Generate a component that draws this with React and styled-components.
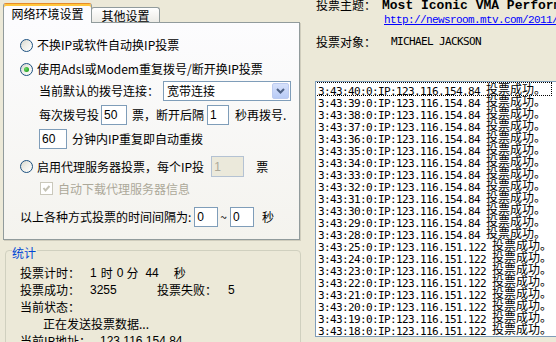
import React from "react";
import styled, { createGlobalStyle, css } from "styled-components";

const CJK = `"Noto Sans CJK SC", "Noto Sans", sans-serif`;
const MONO = `"Liberation Mono", "Noto Sans CJK SC", monospace`;
const DMONO = `"DejaVu Sans Mono", "Noto Sans CJK SC", monospace`;
const SANS = `"Liberation Sans", "Noto Sans CJK SC", sans-serif`;

const GlobalStyle = createGlobalStyle`
  html, body { margin: 0; padding: 0; background: #ece9d8; }
  body { font-family: ${CJK}; font-size: 12px; color: #000; }
  #root { width: 556px; height: 342px; overflow: hidden; }
`;

const Window = styled.div`
  display: flex;
  width: 556px;
  height: 342px;
  overflow: hidden;
  background: #ece9d8;
`;

const LeftCol = styled.div`
  flex: none;
  width: 301px;
  box-sizing: border-box;
  padding: 3px 0 0 3px;
  display: flex;
  flex-direction: column;
`;

const TabStrip = styled.div`
  display: flex;
  align-items: flex-end;
  height: 19px;
  flex: none;
`;

const Tab = styled.div`
  box-sizing: border-box;
  flex: none;
  width: ${(p) => p.$w}px;
  display: flex;
  align-items: center;
  justify-content: center;
  line-height: 12px;
  white-space: nowrap;
  border: 1px solid #919b9c;
  border-bottom: none;
  border-radius: 3px 3px 0 0;
  position: relative;
  ${(p) =>
    p.$active
      ? css`
          height: 20px;
          margin-bottom: -1px;
          z-index: 1;
          background: #fcfcfe;
          border-top: 1px solid #e68b2c;
          box-shadow: inset 0 2px 0 #ffc73c;
          padding-top: 1px;
        `
      : css`
          height: 15px;
          margin-left: -1px;
          background: linear-gradient(#ffffff, #ecebe6);
          padding-top: 1px;
        `}
`;

const TabPanel = styled.div`
  box-sizing: border-box;
  flex: none;
  width: 297px;
  height: 218px;
  border: 1px solid #919b9c;
  background: linear-gradient(180deg, #fcfcfe 0%, #f4f3ee 100%);
  box-shadow: 1px 1px 0 #d0cdbd;
  padding: 14px 0 0 16px;
  display: flex;
  flex-direction: column;
`;

const Line = styled.div`
  display: flex;
  align-items: center;
  white-space: nowrap;
  line-height: 12px;
  flex: none;
  height: ${(p) => p.$h || 16}px;
  margin-top: ${(p) => p.$mt || 0}px;
  margin-left: ${(p) => p.$ml || 0}px;
  color: ${(p) => (p.$disabled ? "#aca899" : "#000")};
`;

const Txt = styled.span`
  margin-left: ${(p) => p.$ml || 0}px;
`;

const Radio = styled.span`
  box-sizing: border-box;
  flex: none;
  width: 13px;
  height: 13px;
  border-radius: 50%;
  border: 1px solid #1c5180;
  background: linear-gradient(135deg, #d6d6cc 0%, #eeeee8 45%, #ffffff 100%);
  display: flex;
  align-items: center;
  justify-content: center;
  &::after {
    content: "";
    width: 5px;
    height: 5px;
    border-radius: 50%;
    background: ${(p) =>
      p.$checked
        ? "radial-gradient(circle at 35% 35%, #6ad865, #21a121 75%)"
        : "transparent"};
  }
`;

const Check = styled.span`
  box-sizing: border-box;
  flex: none;
  width: 13px;
  height: 13px;
  border: 1px solid #cac8bb;
  background: #fff;
  display: flex;
  align-items: center;
  justify-content: center;
`;

const Field = styled.input.attrs({ readOnly: true, type: "text" })`
  box-sizing: border-box;
  flex: none;
  width: ${(p) => p.$w}px;
  height: ${(p) => p.$h || 20}px;
  margin: 0 0 0 ${(p) => p.$ml || 0}px;
  padding: 0 0 0 2px;
  border: 1px solid ${(p) => (p.disabled ? "#b4c2d3" : "#7f9db9")};
  border-radius: 0;
  outline: none;
  background: ${(p) => (p.disabled ? "#ebe9db" : "#fff")};
  color: ${(p) => (p.disabled ? "#aca899" : "#000")};
  font: 12px ${SANS};
`;

const Combo = styled.div`
  box-sizing: border-box;
  flex: none;
  width: 128px;
  height: 20px;
  margin-left: 4px;
  border: 1px solid #7f9db9;
  background: #fff;
  display: flex;
  align-items: center;
`;

const ComboText = styled.span`
  flex: 1;
  padding-left: 3px;
`;

const ComboButton = styled.span`
  box-sizing: border-box;
  flex: none;
  width: 17px;
  height: 16px;
  margin-right: 1px;
  border: 1px solid #bccbf0;
  border-radius: 2px;
  background: linear-gradient(#d6e1fb, #b8cbf6);
  display: flex;
  align-items: center;
  justify-content: center;
`;

const Group = styled.fieldset`
  box-sizing: border-box;
  margin: 1px 0 0 2px;
  width: 296px;
  min-width: 0;
  border: 1px solid #d0d0bf;
  border-radius: 4px;
  padding: 5px 0 0 6px;
`;

const Legend = styled.legend`
  padding: 6px 1px 0 0;
  color: #0046d5;
  line-height: 12px;
  font-size: 12px;
`;

const StatRow = styled.div`
  display: flex;
  align-items: center;
  height: 17px;
  line-height: 17px;
  white-space: pre;
  margin-left: ${(p) => p.$ml ?? 8}px;
`;

const StatLabel = styled.span`
  flex: none;
  width: ${(p) => (p.$w ? `${p.$w}px` : "auto")};
`;

const Num = styled.span`
  flex: none;
  font: 12px ${SANS};
  margin-left: ${(p) => p.$ml || 0}px;
  width: ${(p) => (p.$w ? `${p.$w}px` : "auto")};
`;

const RightCol = styled.div`
  flex: 1;
  min-width: 0;
  padding-left: 15px;
  display: flex;
  flex-direction: column;
`;

const InfoLine = styled.div`
  display: flex;
  align-items: center;
  flex: none;
  height: 12px;
  line-height: 12px;
  white-space: nowrap;
  margin-top: ${(p) => p.$mt || 0}px;
  margin-left: ${(p) => p.$ml || 0}px;
`;

const Title = styled.span`
  margin-left: 6px;
  font: bold 13px ${MONO};
  color: #000;
`;

const Mono = styled.span`
  font: 11px/12px ${DMONO};
  letter-spacing: -0.62px;
  margin-left: ${(p) => p.$ml || 0}px;
`;

const Link = styled.a`
  font: 11px ${MONO};
  letter-spacing: -0.6px;
  color: #0000ff;
  text-decoration: underline;
`;

const LogList = styled.div`
  box-sizing: border-box;
  flex: none;
  margin: 33px 0 0 -1px;
  width: 262px;
  height: 256px;
  border: 1px solid #7f9db9;
  background: #fff;
  padding: 1px 0 0 0;
  overflow: hidden;
`;

const LogRow = styled.div`
  box-sizing: border-box;
  width: 235px;
  height: 12px;
  line-height: 12px;
  padding-left: 2px;
  white-space: pre;
  overflow: visible;
  ${(p) =>
    p.$focused &&
    css`
      outline: 1px dotted #000;
      outline-offset: 0;
    `}
`;

const LogText = styled.span`
  font: 12px/12px ${CJK};
  vertical-align: 1px;
`;

const Chevron = () => (
  <svg width="9" height="6" viewBox="0 0 9 6">
    <polyline points="1,1 4.5,4.5 8,1" fill="none" stroke="#4d6185" strokeWidth="2" />
  </svg>
);

const CheckMark = () => (
  <svg width="9" height="9" viewBox="0 0 9 9">
    <polyline points="1.5,4 3.5,6.5 7.5,2" fill="none" stroke="#c4c2b4" strokeWidth="2" />
  </svg>
);

const logs = [
  ...[40, 39, 38, 37, 36, 35, 34, 33, 32, 31, 30, 29, 28].map((s) => ({
    t: `3:43:${s}`,
    ip: "123.116.154.84",
  })),
  ...[25, 24, 23, 22, 21, 20, 19, 18].map((s) => ({
    t: `3:43:${s}`,
    ip: "123.116.151.122",
  })),
];

export default function App() {
  return (
    <>
      <GlobalStyle />
      <Window>
        <LeftCol>
          <TabStrip>
            <Tab $active $w={89}>网络环境设置</Tab>
            <Tab $w={69}>其他设置</Tab>
          </TabStrip>
          <TabPanel>
            <Line>
              <Radio />
              <Txt $ml={4}>不换IP或软件自动换IP投票</Txt>
            </Line>
            <Line $mt={8}>
              <Radio $checked />
              <Txt $ml={4}>使用Adsl或Modem重复拨号/断开换IP投票</Txt>
            </Line>
            <Line $h={20} $mt={4} $ml={19}>
              <Txt>当前默认的拨号连接：</Txt>
              <Combo>
                <ComboText>宽带连接</ComboText>
                <ComboButton>
                  <Chevron />
                </ComboButton>
              </Combo>
            </Line>
            <Line $h={20} $mt={4} $ml={19}>
              <Txt>每次拨号投</Txt>
              <Field $w={26} $ml={2} value="50" />
              <Txt $ml={5}>票，断开后隔</Txt>
              <Field $w={22} $ml={3} value="1" />
              <Txt $ml={6}>秒再拨号.</Txt>
            </Line>
            <Line $h={20} $mt={4} $ml={19}>
              <Field $w={28} value="60" />
              <Txt $ml={5}>分钟内IP重复即自动重拨</Txt>
            </Line>
            <Line $h={21} $mt={7}>
              <Radio />
              <Txt $ml={4}>启用代理服务器投票，每个IP投</Txt>
              <Field $w={33} $h={21} $ml={7} value="1" disabled />
              <Txt $ml={12}>票</Txt>
            </Line>
            <Line $h={13} $mt={5} $ml={20} $disabled>
              <Check>
                <CheckMark />
              </Check>
              <Txt $ml={5}>自动下载代理服务器信息</Txt>
            </Line>
            <Line $h={20} $mt={12}>
              <Txt>以上各种方式投票的时间间隔为:</Txt>
              <Field $w={24} $ml={3} value="0" />
              <Txt $ml={2}>~</Txt>
              <Field $w={24} $ml={3} value="0" />
              <Txt $ml={8}>秒</Txt>
            </Line>
          </TabPanel>
          <Group>
            <Legend>统计</Legend>
            <StatRow>
              <StatLabel $w={70}>投票计时：</StatLabel>
              <Num>1</Num>
              <Txt $ml={4}>时</Txt>
              <Num $ml={4}>0</Num>
              <Txt $ml={3}>分</Txt>
              <Num $ml={7}>44</Num>
              <Txt $ml={15}>秒</Txt>
            </StatRow>
            <StatRow>
              <StatLabel $w={70}>投票成功：</StatLabel>
              <Num $w={67}>3255</Num>
              <StatLabel $w={71}>投票失败：</StatLabel>
              <Num>5</Num>
            </StatRow>
            <StatRow>
              <StatLabel>当前状态：</StatLabel>
            </StatRow>
            <StatRow $ml={31}>
              <StatLabel>正在发送投票数据...</StatLabel>
            </StatRow>
            <StatRow>
              <StatLabel $w={80}>当前IP地址：</StatLabel>
              <Num>123.116.154.84</Num>
            </StatRow>
          </Group>
        </LeftCol>
        <RightCol>
          <InfoLine $mt={-1}>
            <Txt>投票主题：</Txt>
            <Title>Most Iconic VMA Performances</Title>
          </InfoLine>
          <InfoLine $mt={3} $ml={68}>
            <Link href="#">http://newsroom.mtv.com/2011/08/</Link>
          </InfoLine>
          <InfoLine $mt={10}>
            <Txt>投票对象：</Txt>
            <Mono $ml={15}>MICHAEL JACKSON</Mono>
          </InfoLine>
          <LogList>
            {logs.map((l, i) => (
              <LogRow key={i} $focused={i === 0}>
                <Mono>{`${l.t}:0:IP:${l.ip} `}</Mono>
                <LogText>投票成功。</LogText>
              </LogRow>
            ))}
          </LogList>
        </RightCol>
      </Window>
    </>
  );
}
